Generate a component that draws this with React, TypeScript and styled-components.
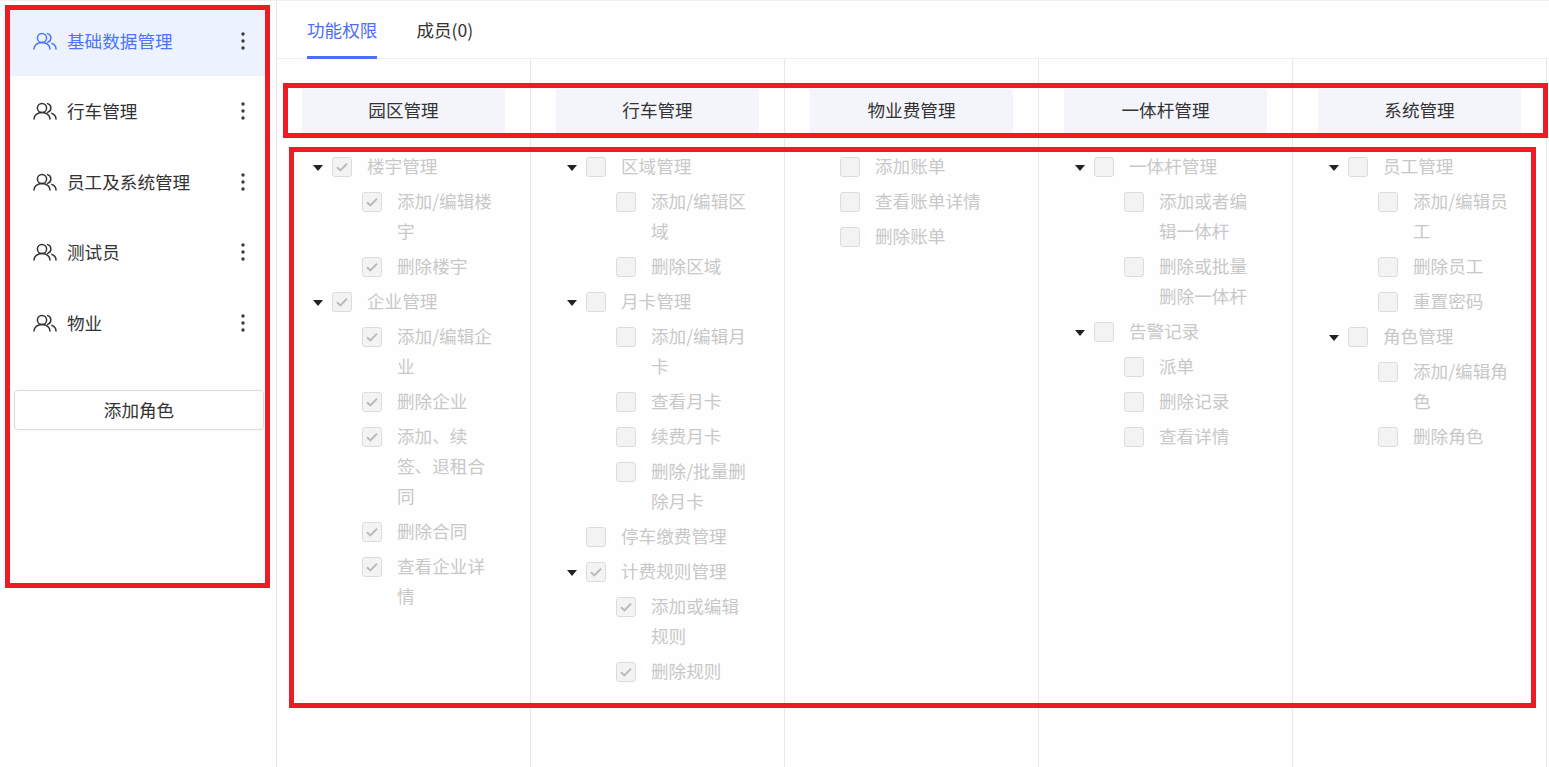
import { EllipsisVertical } from "lucide-react";
import styled, { createGlobalStyle } from "styled-components";

type PermNode = { label: string; open?: boolean; checked?: boolean; children?: PermNode[] };
type PermColumn = { title: string; nodes: PermNode[] };

const GlobalStyle = createGlobalStyle`
  html, body {
    margin: 0;
    padding: 0;
    background: #fefefe;
  }
  body {
    font-family: "Noto Sans CJK SC", "Liberation Sans", sans-serif;
    font-size: 17.6px;
    color: #333;
  }
`;

const Page = styled.div`
  position: relative;
  display: flex;
  width: 1549px;
  height: 767px;
  overflow: hidden;
  border-top: 1px solid #f0f0f0;
  box-sizing: border-box;
`;

const Sidebar = styled.aside`
  width: 277px;
  flex-shrink: 0;
  box-sizing: border-box;
  padding: 4.5px 6px 0;
  border-right: 1px solid #e4e6ee;
`;

const RoleItem = styled.div<{ $active?: boolean }>`
  display: flex;
  align-items: center;
  height: 70.5px;
  padding: 0 15px 0 27px;
  gap: 10px;
  color: ${({ $active }) => ($active ? "#4d74ff" : "#333")};
  background: ${({ $active }) => ($active ? "#ecf3fe" : "transparent")};
`;

const RoleName = styled.span`
  flex: 1;
  line-height: 29px;
  padding-bottom: 1px;
`;

const MoreIcon = styled(EllipsisVertical)`
  color: #333;
  flex-shrink: 0;
`;

const AddRole = styled.button`
  display: block;
  width: 250px;
  height: 40px;
  margin: 31.5px 0 0 8px;
  background: #fff;
  border: 1px solid #d9d9d9;
  border-radius: 4px;
  box-shadow: 0 2px 0 rgba(0, 0, 0, 0.015);
  font: inherit;
  color: #333;
`;

const Main = styled.main`
  flex: 1;
  display: flex;
  flex-direction: column;
`;

const Tabs = styled.div`
  display: flex;
  gap: 39px;
  height: 58px;
  padding-left: 30px;
  border-bottom: 1px solid #f0f0f0;
  box-sizing: border-box;
`;

const Tab = styled.div<{ $active?: boolean }>`
  height: 58px;
  box-sizing: border-box;
  line-height: 58px;
  color: ${({ $active }) => ($active ? "#4d6ef5" : "#333")};
  border-bottom: 3px solid ${({ $active }) => ($active ? "#4a70f8" : "transparent")};
`;

const Columns = styled.div`
  flex: 1;
  display: flex;
`;

const Column = styled.section`
  width: 254px;
  box-sizing: border-box;
  padding: 30px 25px 0;
  border-right: 1px solid #e8e8e8;
`;

const ColumnTitle = styled.div`
  height: 44px;
  box-sizing: border-box;
  line-height: 42px;
  padding-bottom: 2px;
  text-align: center;
  background: #f3f5fa;
  color: #333;
  margin-bottom: 19px;
`;

const Tree = styled.div`
  padding-left: 10px;
`;

const Row = styled.div`
  display: flex;
  align-items: flex-start;
  margin-bottom: 5px;
`;

const Slot = styled.div`
  width: 20px;
  height: 30px;
  flex-shrink: 0;
  padding: 13px 0 0 1px;
  box-sizing: border-box;
`;

const Caret = styled.div`
  width: 0;
  height: 0;
  border-left: 5px solid transparent;
  border-right: 5px solid transparent;
  border-top: 6px solid #222;
`;

const Check = styled.div`
  width: 20px;
  height: 20px;
  flex-shrink: 0;
  box-sizing: border-box;
  margin: 5px 15px 0 0;
  background: #f3f3f3;
  border: 1px solid #dcdcdc;
  border-radius: 3px;
  display: flex;
  align-items: center;
  justify-content: center;
`;

const Label = styled.div`
  line-height: 30px;
  margin-top: -1px;
  margin-bottom: 1px;
  color: #c8c8c8;
  white-space: pre-line;
`;

const Children = styled.div`
  padding-left: 30px;
`;

const RedFrame = styled.div<{ $x: number; $y: number; $w: number; $h: number }>`
  position: absolute;
  left: ${({ $x }) => $x}px;
  top: ${({ $y }) => $y}px;
  width: ${({ $w }) => $w}px;
  height: ${({ $h }) => $h}px;
  box-sizing: border-box;
  border: 5px solid #ed1c24;
  pointer-events: none;
`;

const roles = ["基础数据管理", "行车管理", "员工及系统管理", "测试员", "物业"];

const columns: PermColumn[] = [
  {
    title: "园区管理",
    nodes: [
      {
        label: "楼宇管理",
        open: true,
        checked: true,
        children: [
          { label: "添加/编辑楼\n宇", checked: true },
          { label: "删除楼宇", checked: true },
        ],
      },
      {
        label: "企业管理",
        open: true,
        checked: true,
        children: [
          { label: "添加/编辑企\n业", checked: true },
          { label: "删除企业", checked: true },
          { label: "添加、续\n签、退租合\n同", checked: true },
          { label: "删除合同", checked: true },
          { label: "查看企业详\n情", checked: true },
        ],
      },
    ],
  },
  {
    title: "行车管理",
    nodes: [
      {
        label: "区域管理",
        open: true,
        children: [{ label: "添加/编辑区\n域" }, { label: "删除区域" }],
      },
      {
        label: "月卡管理",
        open: true,
        children: [
          { label: "添加/编辑月\n卡" },
          { label: "查看月卡" },
          { label: "续费月卡" },
          { label: "删除/批量删\n除月卡" },
        ],
      },
      { label: "停车缴费管理" },
      {
        label: "计费规则管理",
        open: true,
        checked: true,
        children: [
          { label: "添加或编辑\n规则", checked: true },
          { label: "删除规则", checked: true },
        ],
      },
    ],
  },
  {
    title: "物业费管理",
    nodes: [{ label: "添加账单" }, { label: "查看账单详情" }, { label: "删除账单" }],
  },
  {
    title: "一体杆管理",
    nodes: [
      {
        label: "一体杆管理",
        open: true,
        children: [{ label: "添加或者编\n辑一体杆" }, { label: "删除或批量\n删除一体杆" }],
      },
      {
        label: "告警记录",
        open: true,
        children: [{ label: "派单" }, { label: "删除记录" }, { label: "查看详情" }],
      },
    ],
  },
  {
    title: "系统管理",
    nodes: [
      {
        label: "员工管理",
        open: true,
        children: [{ label: "添加/编辑员\n工" }, { label: "删除员工" }, { label: "重置密码" }],
      },
      {
        label: "角色管理",
        open: true,
        children: [{ label: "添加/编辑角\n色" }, { label: "删除角色" }],
      },
    ],
  },
];

const UsersIcon = () => (
  <svg width="24" height="18" viewBox="0 0 24 18" fill="none" stroke="currentColor" strokeWidth="1.5" strokeLinecap="round">
    <circle cx="9" cy="6" r="4.6" />
    <path d="M1 17c0-3.9 3.5-6.4 8-6.4s8 2.5 8 6.4" />
    <path d="M14.6 1.6a4.6 4.6 0 0 1 0 8.8" />
    <path d="M18.8 11.4c2.4 1 4.2 3 4.2 5.6" />
  </svg>
);

const CheckMark = () => (
  <svg width="14" height="12" viewBox="0 0 14 12" fill="none" stroke="#b9b9b9" strokeWidth="2">
    <path d="M2 6.2l3.4 3.2L12 2.6" />
  </svg>
);

const TreeNode = ({ node }: { node: PermNode }) => (
  <>
    <Row>
      <Slot>{node.open && <Caret />}</Slot>
      <Check>{node.checked && <CheckMark />}</Check>
      <Label>{node.label}</Label>
    </Row>
    {node.children && (
      <Children>
        {node.children.map((child) => (
          <TreeNode key={child.label} node={child} />
        ))}
      </Children>
    )}
  </>
);

export default function App() {
  return (
    <Page>
      <GlobalStyle />
      <Sidebar>
        {roles.map((role, i) => (
          <RoleItem key={role} $active={i === 0}>
            <UsersIcon />
            <RoleName>{role}</RoleName>
            <MoreIcon size={24} strokeWidth={1.4} />
          </RoleItem>
        ))}
        <AddRole type="button">添加角色</AddRole>
      </Sidebar>
      <Main>
        <Tabs>
          <Tab $active>功能权限</Tab>
          <Tab>成员(0)</Tab>
        </Tabs>
        <Columns>
          {columns.map((col) => (
            <Column key={col.title}>
              <ColumnTitle>{col.title}</ColumnTitle>
              <Tree>
                {col.nodes.map((node) => (
                  <TreeNode key={node.label} node={node} />
                ))}
              </Tree>
            </Column>
          ))}
        </Columns>
      </Main>
      <RedFrame $x={5} $y={4} $w={265} $h={583} />
      <RedFrame $x={283} $y={82} $w={1265} $h={55} />
      <RedFrame $x={289} $y={146} $w={1247} $h={561} />
    </Page>
  );
}
